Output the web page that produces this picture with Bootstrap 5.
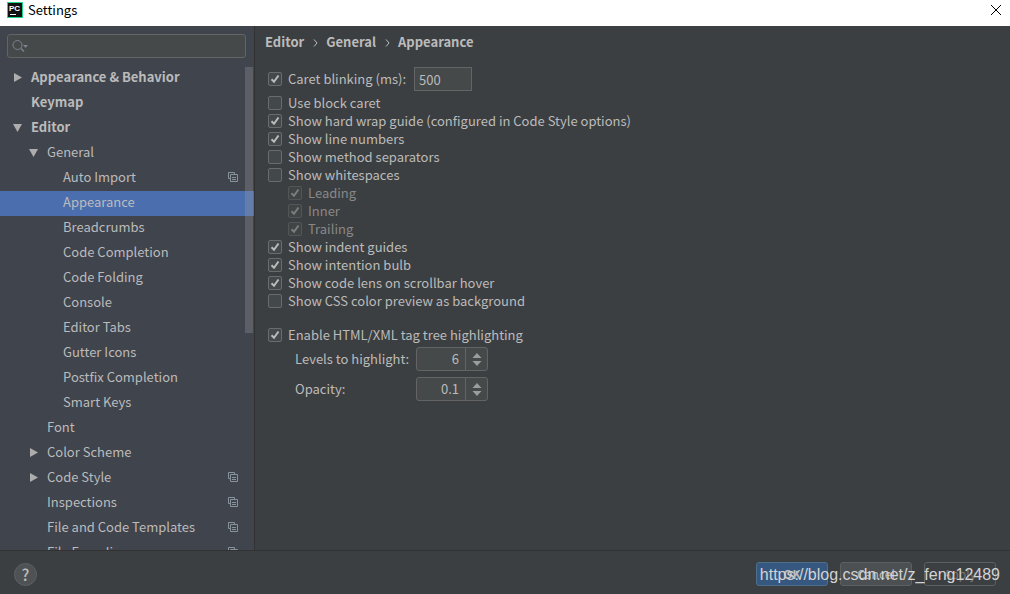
<!DOCTYPE html>
<html lang="en">
<head>
<meta charset="utf-8">
<meta name="viewport" content="width=device-width, initial-scale=1">
<title>Settings</title>
<link href="https://cdn.jsdelivr.net/npm/bootstrap@5.3.0/dist/css/bootstrap.min.css" rel="stylesheet">
<style>
  :root { --line: #646464; --field: #45494a; --ink: #bbbbbb; --edge: #323232; }
  body { font-family: "Noto Sans CJK SC", "Noto Sans", sans-serif; font-size: 13px; line-height: 18px; color: var(--ink); background: #3c3f41; }
  .titlebar { height: 26px; padding: 0 8px 6px 7px; gap: 5px; background: #fff; color: #000; }
  .sidebar { width: 255px; background: #40444d; border-right: 1px solid var(--edge); }
  .search { height: 24px; margin: 8px 8px 8px 7px; padding: 0 4px; border: 1px solid var(--line); border-radius: 3px; background: var(--field); }
  .search input { background: none; color: var(--ink); outline: 0; }
  .tree a { height: 25px; padding: 0 16px 3px 12px; color: var(--ink); }
  .tree .lvl-1 { padding-left: 28px; }
  .tree .lvl-2 { padding-left: 44px; }
  .tree .active { background: #4b6eaf; }
  .twist { width: 11px; height: 11px; margin-right: 8px; fill: #adadad; flex: none; }
  .copy { width: 10px; height: 10px; fill: none; stroke: #87929b; }
  .thumb { top: 1px; right: 1px; width: 8px; height: 266px; background: rgba(166, 166, 166, .28); }
  .crumbs { padding: 7px 10px; }
  .crumbs svg { width: 5px; height: 8px; margin: 2px 8px 0 9px; fill: none; stroke: var(--ink); }
  .options { padding: 9px 13px; }
  .opt { gap: 6px; height: 18px; }
  .opt.sub { margin-left: 20px; color: #888; }
  .tick { appearance: none; width: 14px; height: 14px; margin: 0; flex: none; border: 1px solid #6b6b6b; border-radius: 2px; background: #43494a center / 12px 12px no-repeat; }
  .tick:checked { background-image: url("data:image/svg+xml,%3Csvg xmlns='http://www.w3.org/2000/svg' viewBox='0 0 12 12'%3E%3Cpath d='M2.5 6.2 5 8.8 9.5 2.5' fill='none' stroke='%23bbb' stroke-width='2'/%3E%3C/svg%3E"); }
  .tick:disabled { opacity: .5; }
  .field { height: 24px; border: 1px solid var(--line); background: var(--field); color: var(--ink); }
  .first-row { margin-bottom: 3px; }
  .first-row .opt { width: 146px; }
  .caret { width: 58px; padding: 0 4px; }
  .spin { width: 72px; border-radius: 3px; }
  .spin input { background: none; color: var(--ink); padding: 0 6px 0 0; text-align: right; }
  .spin button { width: 22px; border-left: 1px solid var(--line) !important; background: none; }
  .spin svg { width: 10px; height: 14px; fill: #9a9da0; }
  .level { margin: 3px 0 6px 27px; }
  .level label { width: 121px; }
  .footer { height: 44px; padding: 3px 14px 0; border-top: 1px solid var(--edge); background: #3c3f41; }
  .help { width: 23px; height: 23px; border: 1px solid #5e6162; border-radius: 50%; background: #4e5254; color: var(--ink); font-size: 16px; line-height: 20px; font-weight: 500; }
  .actions { gap: 12px; }
  .act { width: 72px; height: 24px; padding: 0; border: 1px solid #5e6060; border-radius: 3px; background: #4c5052; color: var(--ink); font-size: 12px; line-height: 20px; }
  .act:first-child { background: #365880; border-color: #4c708c; font-weight: 700; }
  .act:disabled { background: none; color: #777; border-color: #5e6060; }
  .site { right: 10px; top: 12px; font: 16px/24px "Liberation Sans", sans-serif; color: #d2d3d4; }
</style>
</head>
<body>
<svg class="d-none">
  <symbol id="closed" viewBox="0 0 11 11"><path d="M2 1v9l8-4.500z"/></symbol>
  <symbol id="open" viewBox="0 0 11 11"><path d="M1 2h9L5.500 10z"/></symbol>
  <symbol id="blank" viewBox="0 0 11 11"></symbol>
  <symbol id="pages" viewBox="0 0 10 10"><path d="M2.500 6.500h-2v-6h6v2M2.500 2.500h7v7h-7zM4 5.500h4M4 7.500h4"/></symbol>
  <symbol id="step" viewBox="0 0 10 14"><path d="M.5 6 5 1l4.500 5zM.5 9h9L5 14z"/></symbol>
  <symbol id="chev" viewBox="0 0 5 8"><path d="M1 .5 4 4 1 7.500"/></symbol>
</svg>
<div class="vh-100 d-flex flex-column overflow-hidden">
  <header class="titlebar d-flex align-items-center flex-shrink-0">
    <svg width="16" height="16" viewBox="0 0 16 16"><path fill="#21d789" d="M0 0h16v16H0z"/><path fill="#111" d="M1 1h14v14H1z"/><path fill="#fff" d="M3 12h6v1H3z"/><text x="2" y="9" font-family="Liberation Sans" font-size="8" font-weight="700" fill="#fff">PC</text></svg>
    <span>Settings</span>
    <button class="ms-auto border-0 bg-transparent p-0 d-flex" aria-label="Close"><svg width="12" height="12" viewBox="0 0 12 12" stroke="#000"><path d="M1 1l10 10M11 1 1 11"/></svg></button>
  </header>
  <div class="d-flex flex-grow-1 overflow-hidden">
    <aside class="sidebar d-flex flex-column flex-shrink-0">
      <div class="search d-flex align-items-center flex-shrink-0">
        <svg width="18" height="14" viewBox="0 0 18 14" fill="none" stroke="#7a858e" aria-hidden="true"><circle cx="5.500" cy="6" r="4.500"/><path d="M9 9.500l3 3" stroke-width="1.500"/><path d="M11 6h5l-2.500 3z" fill="#7a858e" stroke="none"/></svg>
        <input type="text" class="border-0 flex-grow-1 p-0 w-50" aria-label="Search settings">
      </div>
      <div class="position-relative flex-grow-1 overflow-hidden">
        <nav class="tree nav flex-column flex-nowrap" aria-label="Settings">
          <a href="#" class="d-flex align-items-center text-decoration-none fw-bold"><svg class="twist"><use href="#closed"/></svg>Appearance &amp; Behavior</a>
          <a href="#" class="d-flex align-items-center text-decoration-none fw-bold"><svg class="twist"><use href="#blank"/></svg>Keymap</a>
          <a href="#" class="d-flex align-items-center text-decoration-none fw-bold"><svg class="twist"><use href="#open"/></svg>Editor</a>
          <a href="#" class="lvl-1 d-flex align-items-center text-decoration-none"><svg class="twist"><use href="#open"/></svg>General</a>
          <a href="#" class="lvl-2 d-flex align-items-center text-decoration-none"><svg class="twist"><use href="#blank"/></svg>Auto Import<svg class="copy ms-auto"><use href="#pages"/></svg></a>
          <a href="#" class="lvl-2 active d-flex align-items-center text-decoration-none"><svg class="twist"><use href="#blank"/></svg>Appearance</a>
          <a href="#" class="lvl-2 d-flex align-items-center text-decoration-none"><svg class="twist"><use href="#blank"/></svg>Breadcrumbs</a>
          <a href="#" class="lvl-2 d-flex align-items-center text-decoration-none"><svg class="twist"><use href="#blank"/></svg>Code Completion</a>
          <a href="#" class="lvl-2 d-flex align-items-center text-decoration-none"><svg class="twist"><use href="#blank"/></svg>Code Folding</a>
          <a href="#" class="lvl-2 d-flex align-items-center text-decoration-none"><svg class="twist"><use href="#blank"/></svg>Console</a>
          <a href="#" class="lvl-2 d-flex align-items-center text-decoration-none"><svg class="twist"><use href="#blank"/></svg>Editor Tabs</a>
          <a href="#" class="lvl-2 d-flex align-items-center text-decoration-none"><svg class="twist"><use href="#blank"/></svg>Gutter Icons</a>
          <a href="#" class="lvl-2 d-flex align-items-center text-decoration-none"><svg class="twist"><use href="#blank"/></svg>Postfix Completion</a>
          <a href="#" class="lvl-2 d-flex align-items-center text-decoration-none"><svg class="twist"><use href="#blank"/></svg>Smart Keys</a>
          <a href="#" class="lvl-1 d-flex align-items-center text-decoration-none"><svg class="twist"><use href="#blank"/></svg>Font</a>
          <a href="#" class="lvl-1 d-flex align-items-center text-decoration-none"><svg class="twist"><use href="#closed"/></svg>Color Scheme</a>
          <a href="#" class="lvl-1 d-flex align-items-center text-decoration-none"><svg class="twist"><use href="#closed"/></svg>Code Style<svg class="copy ms-auto"><use href="#pages"/></svg></a>
          <a href="#" class="lvl-1 d-flex align-items-center text-decoration-none"><svg class="twist"><use href="#blank"/></svg>Inspections<svg class="copy ms-auto"><use href="#pages"/></svg></a>
          <a href="#" class="lvl-1 d-flex align-items-center text-decoration-none"><svg class="twist"><use href="#blank"/></svg>File and Code Templates<svg class="copy ms-auto"><use href="#pages"/></svg></a>
          <a href="#" class="lvl-1 d-flex align-items-center text-decoration-none"><svg class="twist"><use href="#blank"/></svg>File Encodings<svg class="copy ms-auto"><use href="#pages"/></svg></a>
        </nav>
        <div class="thumb position-absolute"></div>
      </div>
    </aside>
    <main class="flex-grow-1 overflow-hidden">
      <div class="crumbs d-flex align-items-center fw-bold"><span>Editor</span><svg><use href="#chev"/></svg><span>General</span><svg><use href="#chev"/></svg><span>Appearance</span></div>
      <form class="options">
        <div class="first-row d-flex align-items-center">
          <div class="opt d-flex align-items-center"><input class="tick" type="checkbox" id="c1" checked><label for="c1">Caret blinking (ms):</label></div>
          <input class="field caret" type="text" value="500" aria-label="Caret blinking period">
        </div>
        <div class="opt d-flex align-items-center"><input class="tick" type="checkbox" id="c2"><label for="c2">Use block caret</label></div>
        <div class="opt d-flex align-items-center"><input class="tick" type="checkbox" id="c3" checked><label for="c3">Show hard wrap guide (configured in Code Style options)</label></div>
        <div class="opt d-flex align-items-center"><input class="tick" type="checkbox" id="c4" checked><label for="c4">Show line numbers</label></div>
        <div class="opt d-flex align-items-center"><input class="tick" type="checkbox" id="c5"><label for="c5">Show method separators</label></div>
        <div class="opt d-flex align-items-center"><input class="tick" type="checkbox" id="c6"><label for="c6">Show whitespaces</label></div>
        <div class="opt sub d-flex align-items-center"><input class="tick" type="checkbox" id="c7" checked disabled><label for="c7">Leading</label></div>
        <div class="opt sub d-flex align-items-center"><input class="tick" type="checkbox" id="c8" checked disabled><label for="c8">Inner</label></div>
        <div class="opt sub d-flex align-items-center"><input class="tick" type="checkbox" id="c9" checked disabled><label for="c9">Trailing</label></div>
        <div class="opt d-flex align-items-center"><input class="tick" type="checkbox" id="c10" checked><label for="c10">Show indent guides</label></div>
        <div class="opt d-flex align-items-center"><input class="tick" type="checkbox" id="c11" checked><label for="c11">Show intention bulb</label></div>
        <div class="opt d-flex align-items-center"><input class="tick" type="checkbox" id="c12" checked><label for="c12">Show code lens on scrollbar hover</label></div>
        <div class="opt d-flex align-items-center mb-3"><input class="tick" type="checkbox" id="c13"><label for="c13">Show CSS color preview as background</label></div>
        <div class="opt d-flex align-items-center"><input class="tick" type="checkbox" id="c14" checked><label for="c14">Enable HTML/XML tag tree highlighting</label></div>
        <div class="level d-flex align-items-center"><label for="lv">Levels to highlight:</label>
          <div class="field spin d-flex"><input id="lv" type="text" value="6" class="border-0 flex-grow-1 w-50"><button type="button" class="border-0 p-0 d-flex align-items-center justify-content-center" aria-label="Change levels"><svg><use href="#step"/></svg></button></div></div>
        <div class="level d-flex align-items-center"><label for="op">Opacity:</label>
          <div class="field spin d-flex"><input id="op" type="text" value="0.1" class="border-0 flex-grow-1 w-50"><button type="button" class="border-0 p-0 d-flex align-items-center justify-content-center" aria-label="Change opacity"><svg><use href="#step"/></svg></button></div></div>
      </form>
    </main>
  </div>
  <footer class="footer d-flex align-items-center justify-content-between position-relative flex-shrink-0">
    <button class="help p-0">?</button>
    <div class="actions d-flex"><button class="act">OK</button><button class="act">Cancel</button><button class="act" disabled>Apply</button></div>
    <span class="site position-absolute">https://blog.csdn.net/z_feng12489</span>
  </footer>
</div>
<script src="https://cdn.jsdelivr.net/npm/bootstrap@5.3.0/dist/js/bootstrap.bundle.min.js"></script>
</body>
</html>
